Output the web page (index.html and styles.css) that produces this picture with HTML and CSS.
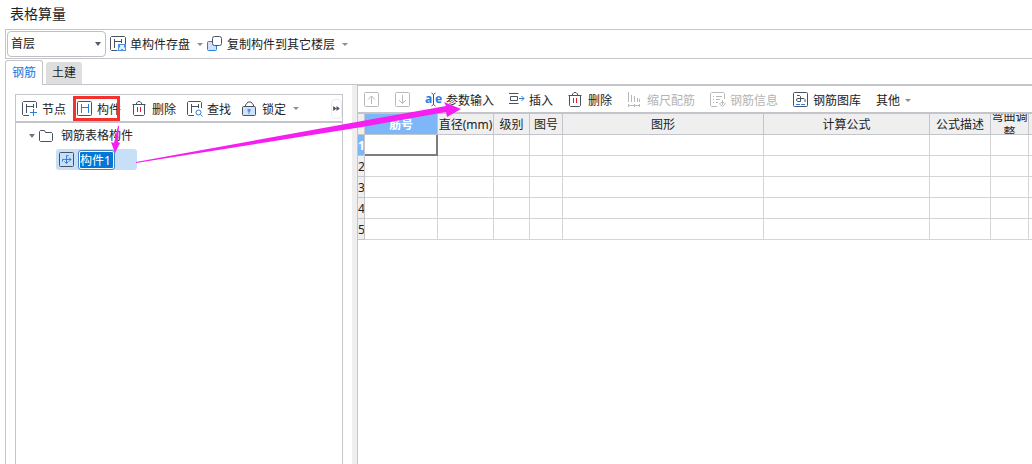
FILE: index.html
```html
<!DOCTYPE html>
<html lang="zh-CN">
<head>
<meta charset="utf-8">
<title>表格算量</title>
<link rel="stylesheet" href="styles.css">
</head>
<body>
<div class="window">
  <h1 class="title">表格算量</h1>

  <div class="topbar">
    <div class="floor">
      <select class="floor-select" aria-label="楼层"><option>首层</option></select>
    </div>
    <button class="tool"><svg class="icon" viewBox="0 0 16 16"><path class="ink" d="M7.500 14.500h-6l-1-1v-12l1-1h13l1 1V8M4.500 3v9M4.500 5.500h7M11.500 3v4"/><path class="fill-blue" d="M8 8h8v7H8z"/><path class="fill-pale" d="M10 9h4v2l1 1v2h-2v-1h-2v1H9v-2l1-1z"/></svg><span>单构件存盘</span><i class="caret"></i></button>
    <button class="tool"><svg class="icon" viewBox="0 0 16 16"><rect class="pale" x=".5" y="5.500" width="9" height="9" rx="1"/><rect class="ink paper" x="5.500" y=".5" width="9" height="9" rx="2"/></svg><span>复制构件到其它楼层</span><i class="caret"></i></button>
  </div>

  <div class="tabs">
    <button class="tab tab-active">钢筋</button>
    <button class="tab">土建</button>
  </div>

  <div class="workspace">
    <section class="side">
      <div class="side-panel">
        <div class="side-tools">
          <button class="tool"><svg class="icon" viewBox="0 0 16 16"><path class="ink" d="M7 14.500H1.500l-1-1v-12l1-1h12l1 1V7M4.500 3v9M4.500 5.500h7M11.500 3v4"/><path class="blue" d="M11.500 8v7M8 11.500h7"/></svg><span>节点</span></button>
          <button class="tool tool-marked"><svg class="icon" viewBox="0 0 16 16"><rect class="ink" x=".5" y=".5" width="14" height="14" rx="1"/><path class="blue" d="M4.500 3v9M11.500 3v9M4.500 6.500h7"/></svg><span>构件</span></button>
          <button class="tool"><svg class="icon" viewBox="0 0 16 16"><path class="ink" d="M.5 3.500h13M4.500 3.500V2L6 .5h2L9.500 2v1.500M1.500 3.500v10l1 1h9l1-1v-10"/><path class="red" d="M5.500 6v5M8.500 6v5"/></svg><span>删除</span></button>
          <button class="tool"><svg class="icon" viewBox="0 0 16 16"><path class="ink" d="M7 14.500H1.500l-1-1v-12l1-1h12l1 1V7M4.500 3v9M4.500 5.500h7M11.500 3v4"/><circle class="blue" cx="11.500" cy="11.500" r="2.500"/><path class="blue" d="M13.500 13.500l2 2"/></svg><span>查找</span></button>
          <button class="tool"><svg class="icon" viewBox="0 0 16 16"><path class="ink" d="M3.500 5.500V4L6 1h3l2.500 3v1.500"/><rect class="ink tint" x=".5" y="5.500" width="13" height="9" rx="1"/><path class="fill-blue" d="M5.500 8h3v2l-1 1v2h-1v-2l-1-1z"/></svg><span>锁定</span><i class="caret"></i></button>
          <button class="more" aria-label="更多"><svg class="more-icon" viewBox="0 0 8 6"><path d="M0 0l4 3-4 3zM4 0l4 3-4 3z"/></svg></button>
        </div>
        <div class="tree">
          <div class="node">
            <i class="caret caret-open"></i>
            <svg class="icon" viewBox="0 0 16 16"><path class="ink" d="M.5 12.500v-9l1-1h4l1 2h6l1 1v7l-1 1h-11z"/></svg>
            <span>钢筋表格构件</span>
          </div>
          <div class="leaf">
            <svg class="icon" viewBox="0 0 16 16"><rect class="ink" x=".5" y=".5" width="14" height="14" rx="1"/><path class="blue" d="M5.500 7.500H12M10 5.500l2 2-2 2M9.500 3.500h-2V11M5.500 9.500l2 2 2-2M5.500 7.500h-2v2"/></svg>
            <input class="rename" type="text" value="构件1" aria-label="构件名称">
          </div>
        </div>
      </div>
    </section>
    <div class="splitter"></div>
    <section class="main">
      <div class="main-tools">
        <button class="tool" aria-label="上移" disabled><svg class="icon" viewBox="0 0 16 16"><rect class="ink" x=".5" y=".5" width="14" height="14" rx="1"/><path class="ink" d="M7.500 12V4M4 7.500l3.500-3.500L11 7.500"/></svg></button>
        <button class="tool" aria-label="下移" disabled><svg class="icon" viewBox="0 0 16 16"><rect class="ink" x=".5" y=".5" width="14" height="14" rx="1"/><path class="ink" d="M7.500 3v8M4 8l3.500 3.500L11 8"/></svg></button>
        <button class="tool"><svg class="icon" viewBox="0 0 16 16"><text class="letter" x="-1" y="11">a</text><text class="letter" x="9" y="11">e</text><path class="ink" d="M5.500 1l2 1.500 2-1.500M7.500 2.500v10M5.500 14l2-1.500 2 1.500"/></svg><span>参数输入</span></button>
        <button class="tool"><svg class="icon" viewBox="0 0 16 16"><path class="ink" d="M0 1.500h9.500M0 11.500h9.500M1.500 4.500h7v4h-7z"/><path class="blue" d="M10 6.500h5M12.500 4L15 6.500 12.500 9"/></svg><span>插入</span></button>
        <button class="tool"><svg class="icon" viewBox="0 0 16 16"><path class="ink" d="M.5 3.500h13M4.500 3.500V2L6 .5h2L9.500 2v1.500M1.500 3.500v10l1 1h9l1-1v-10"/><path class="red" d="M5.500 6v5M8.500 6v5"/></svg><span>删除</span></button>
        <button class="tool" disabled><svg class="icon" viewBox="0 0 16 16"><path class="ink" d="M1.500 0v10M4.500 3v7M7.500 4v6M10.500 6v4M12.500 7v3M1 13.500h12M1.500 12v3M7.500 12v3M12.500 12v3"/></svg><span>缩尺配筋</span></button>
        <button class="tool" disabled><svg class="icon" viewBox="0 0 16 16"><path class="ink" d="M7 14.500H1.500l-1-1v-12l1-1h12l1 1V7M3 4.500h1M6 4.500h6M3 7.500h1M6 7.500h4M3 10.500h1M6 10.500h2M12.500 8v5M9.500 12l1.500-1.500h3l1.500 1.500-3 2.500z"/></svg><span>钢筋信息</span></button>
        <button class="tool"><svg class="icon" viewBox="0 0 16 16"><rect class="ink" x=".5" y=".5" width="14" height="14" rx="1"/><path class="ink" d="M4 3.500h2.500l1 1v5H5l-1.500-1V7L5 6.500h6l1 1V10"/><path class="blue" d="M3 12.500h4M8 12.500h4"/></svg><span>钢筋图库</span></button>
        <button class="tool"><span>其他</span><i class="caret"></i></button>
      </div>
      <table class="grid">
        <colgroup><col class="c-row"><col class="c-no"><col class="c-dia"><col class="c-level"><col class="c-fig"><col class="c-shape"><col class="c-formula"><col class="c-desc"><col class="c-bend"><col></colgroup>
        <thead>
          <tr><th></th><th class="picked">筋号</th><th>直径(mm)</th><th>级别</th><th>图号</th><th>图形</th><th>计算公式</th><th>公式描述</th><th><div class="wrap">弯曲调整</div></th><th></th></tr>
        </thead>
        <tbody>
          <tr><th class="picked">1</th><td class="current"></td><td></td><td></td><td></td><td></td><td></td><td></td><td></td><td></td></tr>
          <tr><th>2</th><td></td><td></td><td></td><td></td><td></td><td></td><td></td><td></td><td></td></tr>
          <tr><th>3</th><td></td><td></td><td></td><td></td><td></td><td></td><td></td><td></td><td></td></tr>
          <tr><th>4</th><td></td><td></td><td></td><td></td><td></td><td></td><td></td><td></td><td></td></tr>
          <tr><th>5</th><td></td><td></td><td></td><td></td><td></td><td></td><td></td><td></td><td></td></tr>
        </tbody>
      </table>
    </section>
  </div>

  <svg class="arrows" width="480" height="180" viewBox="0 0 480 180" aria-hidden="true">
    <path d="M118 126h1l-1 16 2 1-5 10-4-11 3 1z"/>
    <path d="M136 162L362 121 446 106l-2-4 17 7-14 8-1-5-84 15L136 163z"/>
  </svg>
</div>
</body>
</html>
```
FILE: styles.css
```css
* { box-sizing: border-box; }

body {
  margin: 0;
  background: #fff;
  color: #222;
  font: 12px/16px "Noto Sans", "Noto Sans CJK SC", sans-serif;
}

button, input, select { font: inherit; color: inherit; }

.window {
  position: relative;
  display: flex;
  flex-direction: column;
  min-height: 100vh;
  padding-left: 5px;
  overflow: hidden;
}

.title {
  margin: 0;
  padding: 4px 5px 5px;
  font-size: 14px;
  font-weight: 400;
  line-height: 20px;
}

/* Toolbars */
.topbar {
  display: flex;
  align-items: center;
  gap: 4px;
  height: 30px;
  padding-left: 1px;
  border: 1px solid #c4c5ca;
  border-right: 0;
}

.floor { position: relative; width: 99px; }

.floor::after {
  content: "";
  position: absolute;
  top: 11px;
  right: 5px;
  border: 3px solid transparent;
  border-top: 4px solid #555b66;
  border-bottom: 0;
}

.floor-select {
  display: block;
  width: 100%;
  height: 26px;
  padding: 0 3px;
  appearance: none;
  border: 1px solid #bfc0c5;
  border-radius: 4px;
  background: #fff;
}

.tool {
  display: flex;
  flex: none;
  align-items: center;
  gap: 4px;
  padding: 0;
  border: 0;
  background: none;
  white-space: nowrap;
}

.tool span { padding-top: 2px; }
.tool:disabled { color: #b4b4b4; }

.caret {
  margin-left: 3px;
  border: 3px solid transparent;
  border-top: 3px solid #8c8c8c;
  border-bottom: 0;
}

/* Icons */
.icon { flex: none; width: 16px; height: 16px; overflow: visible; fill: none; }
.ink { stroke: #4a5262; }
.blue { stroke: #2a7de1; }
.letter { fill: #2a7de1; font-size: 12px; font-weight: 700; }
.red { stroke: #e0202c; }
.pale { stroke: #2a7de1; fill: #cfe2fa; }
.paper { fill: #fff; }
.tint { fill: #cfe2fa; }
.fill-blue { fill: #4a90ea; }
.fill-pale { fill: #e4effc; }
.tool:disabled .ink { stroke: #b9b9b9; }

/* Tabs */
.tabs {
  display: flex;
  align-items: flex-end;
  gap: 3px;
  height: 26px;
  border-bottom: 1px solid #c4c5ca;
}

.tab {
  width: 36px;
  height: 22px;
  padding: 0;
  border: 0;
  border-radius: 3px 3px 0 0;
  background: #dedede;
}

.tab-active {
  width: 38px;
  height: 25px;
  margin-bottom: -1px;
  border: 1px solid #c4c5ca;
  border-bottom: 0;
  background: #fff;
  color: #1677e0;
}

/* Work area */
.workspace { display: flex; flex: 1; border-left: 1px solid #c4c5ca; }
.side { display: flex; flex: none; width: 346px; padding: 9px 9px 0; }

.side-panel {
  flex: 1;
  min-width: 0;
  border: 1px solid #c4c5ca;
  border-bottom: 0;
}

.side-tools {
  display: flex;
  align-items: center;
  gap: 11px;
  height: 28px;
  padding: 1px 0 0 6px;
  border-bottom: 2px solid #c4c5ca;
}

.tool-marked { position: relative; }

.tool-marked::after {
  content: "";
  position: absolute;
  inset: -4px 1px -3px -4px;
  border: 3px solid #f5312f;
}

.more {
  width: 11px;
  height: 20px;
  margin-left: auto;
  padding: 0 1px;
  border: 1px solid #ececec;
  border-radius: 4px;
  background: #fff;
}

.more-icon { display: block; width: 7px; height: 5px; fill: #4a5262; }

.tree { padding-top: 3px; }

.node {
  display: flex;
  align-items: center;
  gap: 4px;
  height: 20px;
  padding-left: 10px;
}

.node span { margin-left: 2px; }
.caret-open { border-top: 4px solid #777; }

.leaf {
  display: flex;
  align-items: center;
  gap: 3px;
  width: 81px;
  height: 21px;
  margin: 3px 0 0 40px;
  padding-left: 3px;
  border-radius: 3px;
  background: #c8dff8;
}

.rename {
  width: 37px;
  height: 20px;
  padding: 1px;
  border: 1px solid #4b80bd;
  border-radius: 3px;
  outline: 0;
  background: linear-gradient(#0078d7, #0078d7) content-box, #fff;
  background-clip: content-box, border-box;
  color: #fff;
}

.splitter { flex: none; width: 5px; background: #eee; }

.main {
  flex: 1;
  min-width: 0;
  overflow: hidden;
  border-top: 1px solid #c4c5ca;
  border-left: 1px solid #c4c5ca;
}

.main-tools {
  display: flex;
  align-items: center;
  gap: 15px;
  height: 28px;
  padding: 2px 0 0 6px;
  border-bottom: 2px solid #c4c5ca;
}

.main-tools .caret { margin-left: 1px; }

/* Bar table */
.grid { width: 100%; border-spacing: 0; table-layout: fixed; }
.c-row { width: 7px; }
.c-no { width: 73px; }
.c-dia { width: 56px; }
.c-level { width: 36px; }
.c-fig { width: 33px; }
.c-shape { width: 201px; }
.c-formula { width: 166px; }
.c-desc { width: 61px; }
.c-bend { width: 38px; }

.grid th, .grid td {
  height: 21px;
  padding: 2px 0 0;
  overflow: hidden;
  border: solid #d4d4d4;
  border-width: 0 1px 1px 0;
  white-space: nowrap;
}

.grid th {
  border-color: #c4c5ca;
  background: #efefef;
  font-weight: 400;
}

.grid tr > :last-child { border-right: 0; }
.grid .picked { background: #7db7f8; color: #fff; font-weight: 700; }
.grid .current { border: solid #7d7d7d; border-width: 0 2px 2px 0; }

.wrap {
  display: flex;
  align-items: center;
  height: 18px;
  line-height: 16px;
  white-space: normal;
}

/* Guide arrows drawn over the panels */
.arrows {
  position: absolute;
  top: 0;
  left: 0;
  fill: #f41ff0;
  pointer-events: none;
}
```
